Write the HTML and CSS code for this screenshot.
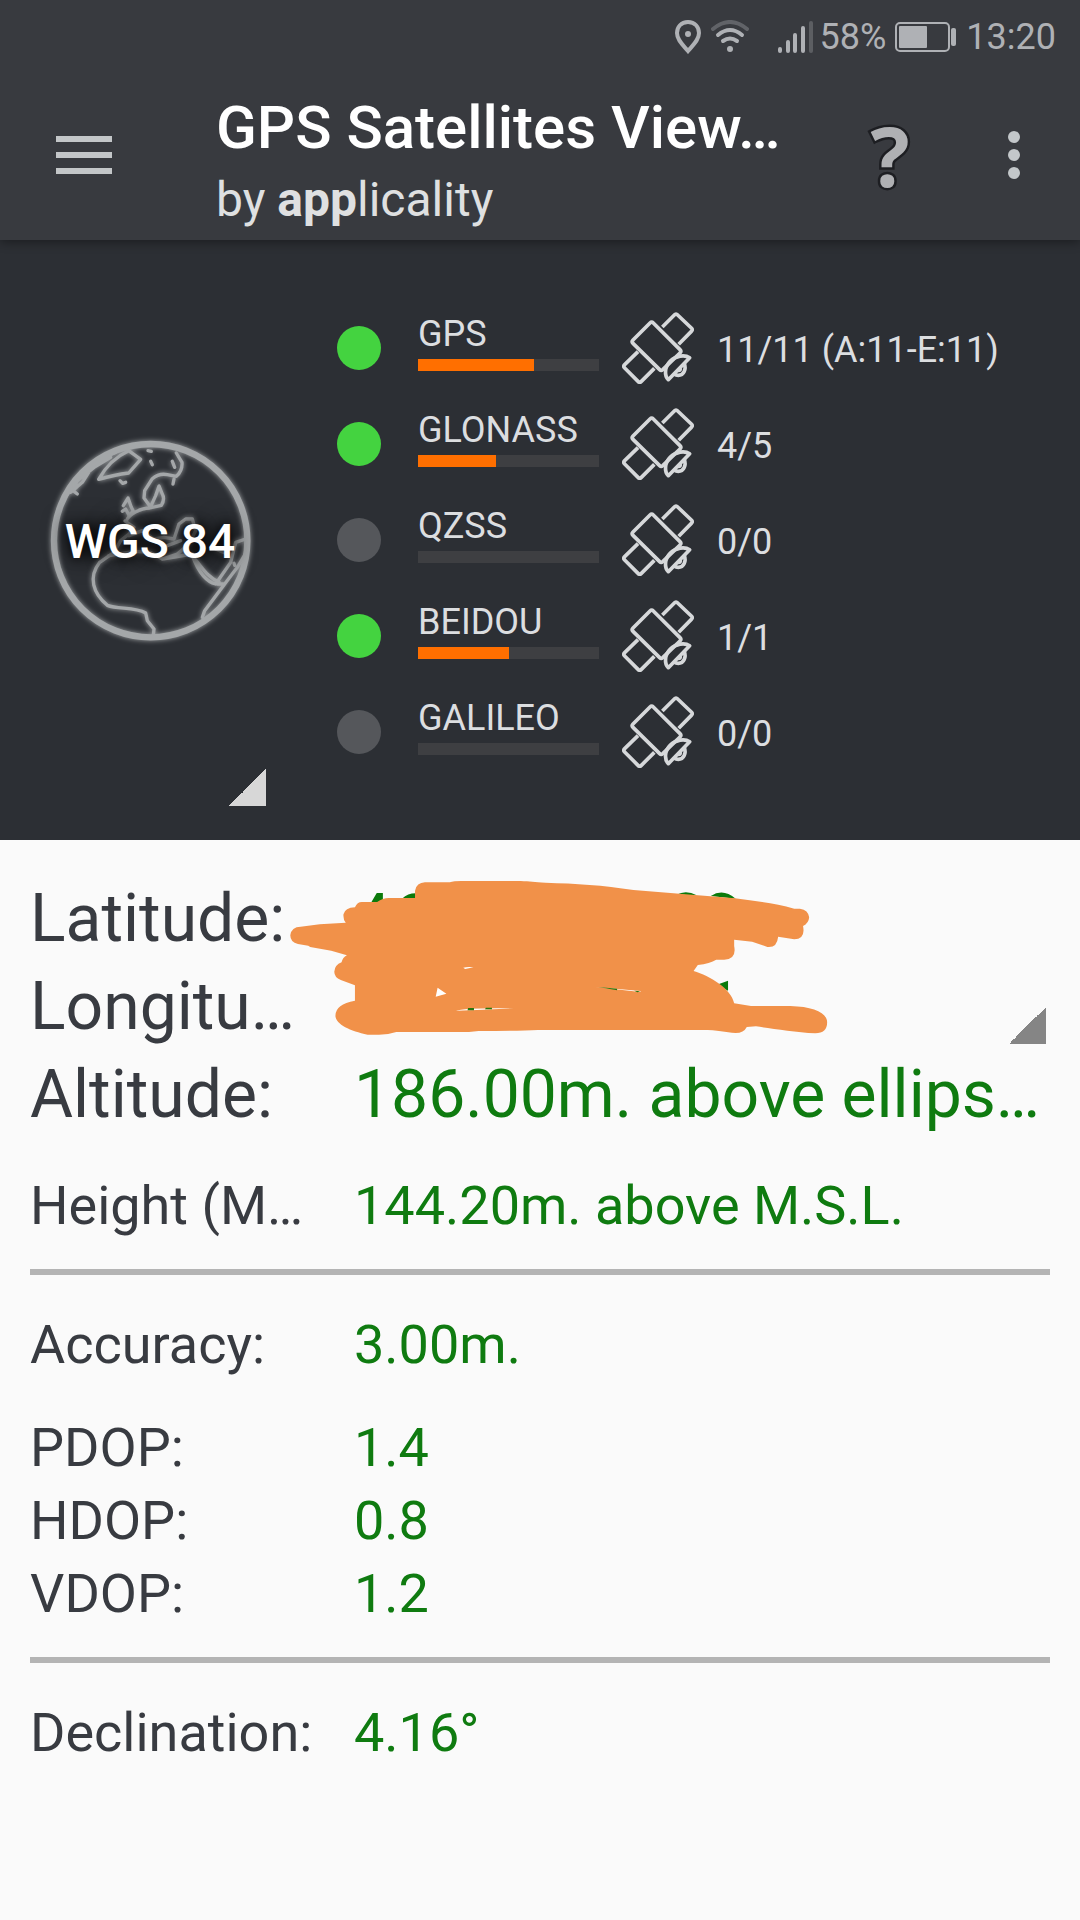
FILE: index.html
```html
<!DOCTYPE html>
<html lang="en">
<head>
<meta charset="utf-8">
<meta name="viewport" content="width=device-width, initial-scale=1">
<title>GPS Satellites Viewer</title>
<link rel="stylesheet" href="styles.css">
</head>
<body>
<svg class="defs" width="0" height="0" aria-hidden="true">
  <symbol id="satellite" viewBox="0 0 216 216">
    <g fill="none" stroke="currentColor" stroke-width="11" stroke-linejoin="round">
      <path d="M121 45 157 9Q162 3 167 9L208 48Q213 53 208 58L170 97"/>
      <path d="M84 33Q89 28 94 33L174 113Q179 118 174 123L123 172Q118 178 113 173L33 94Q28 89 33 84Z"/>
      <path d="M48 119 8 158Q3 163 8 168L48 208Q53 213 58 208L97 169"/>
      <path d="M203 137 139 203C126 190 128 164 145 147C161 131 188 127 203 137Z"/>
      <path d="M187 155C193 171 186 190 169 190Q162 190 156 186M174 168Q178 175 168 175"/>
    </g>
  </symbol>
</svg>

<header class="top">
  <div class="status">
    <svg class="pin" viewBox="0 0 26 34"><path d="M13 2C6 2 2 7 2 13C2 20 8 25 13 31C18 25 24 20 24 13C24 7 20 2 13 2Z" fill="none" stroke="currentColor" stroke-width="4"/><circle cx="13" cy="14" r="3" fill="currentColor"/></svg>
    <svg class="wifi" viewBox="0 0 38 34"><g fill="none" stroke="currentColor" stroke-width="4" stroke-linecap="round"><path d="M2 9Q19-5 36 9" opacity=".35"/><path d="M7 15Q19 5 31 15M12 21Q19 16 26 21"/></g><circle cx="19" cy="29" r="3" fill="currentColor"/></svg>
    <svg class="signal" viewBox="0 0 35 34"><g stroke="currentColor" stroke-width="4" stroke-linecap="round"><path d="M2 29v2M10 22v9M17 15v16M25 8v23"/><path d="M33 3v28" opacity=".3"/></g></svg>
    <span>58%</span>
    <svg class="battery" viewBox="0 0 62 30"><rect x="1" y="1" width="53" height="28" rx="4" fill="none" stroke="currentColor" stroke-width="2"/><rect x="4" y="4" width="28" height="22" rx="1" fill="currentColor"/><rect x="56" y="6" width="5" height="18" rx="2" fill="currentColor"/></svg>
    <time>13:20</time>
  </div>
  <div class="appbar">
    <button class="menu" aria-label="Open menu"><svg viewBox="0 0 56 38"><path d="M0 0h56v6H0zM0 16h56v6H0zM0 32h56v6H0z" fill="currentColor"/></svg></button>
    <div class="titles">
      <h1>GPS Satellites View…</h1>
      <p>by <b>app</b>licality</p>
    </div>
    <button class="help">?</button>
    <button class="more" aria-label="More options"><svg viewBox="0 0 12 48"><g fill="currentColor"><circle cx="6" cy="6" r="6"/><circle cx="6" cy="24" r="6"/><circle cx="6" cy="42" r="6"/></g></svg></button>
  </div>
</header>

<section class="systems">
  <button class="datum">
    <svg class="globe" viewBox="0 0 696 696" aria-hidden="true">
      <defs><filter id="glow" x="-10%" y="-10%" width="120%" height="120%"><feGaussianBlur stdDeviation="8"/></filter></defs>
      <g fill="none" stroke="#a4a7a9" stroke-linejoin="round" stroke-linecap="round">
        <g id="lines">
          <circle cx="350" cy="350" r="290" stroke-width="19"/>
          <g stroke-width="10">
            <path d="M194 166C217 124 247 97 284 80L320 106L284 147Q242 152 194 166"/>
            <path d="M120 190 135 160 165 135 185 115 220 95 245 85M115 200 145 175 172 132M150 145 200 105M105 190 130 210M130 170 180 130 230 100M110 205 128 190"/>
            <path d="M342 80 352 82M350 112 355 122M258 170 266 178 275 175"/>
            <path d="M277 292C282 272 320 252 347 252L382 244Q394 225 384 208L375 186 365 215 350 248M347 245 330 222 332 200 355 164Q375 147 400 152L427 157Q446 140 444 115L427 87"/>
            <path d="M415 112 422 130M417 180 420 165M268 245 282 222 292 250 298 262 285 274 275 255 265 262"/>
            <path d="M273 291 300 310 285 330 260 350 240 385 197 415C162 460 177 507 220 544C252 557 302 547 335 567L340 590 360 615 358 635"/>
            <path d="M285 335 325 320 360 345 390 340 420 345 435 300 455 285 475 285 485 320 465 360 430 390 385 405 350 385 300 382 225 395M385 405 475 390M400 365 440 350"/>
            <path d="M475 395C490 435 510 472 545 480L590 415 605 355 635 345M482 405C505 430 520 460 555 474M550 480H572L512 560 505 580M572 480 610 430 637 385M580 390 545 375M600 418 602 424"/>
          </g>
        </g>
      </g>
      <use href="#lines" fill="none" stroke="#a4a7a9" filter="url(#glow)"/>
    </svg>
    <span>WGS 84</span>
  </button>
  <ul class="list">
    <li><i class="dot on"></i><div class="name">GPS<div class="track"><div class="fill" style="width:64%"></div></div></div><svg class="sat"><use href="#satellite"/></svg><span class="count">11/11 (A:11-E:11)</span></li>
    <li><i class="dot on"></i><div class="name">GLONASS<div class="track"><div class="fill" style="width:43%"></div></div></div><svg class="sat"><use href="#satellite"/></svg><span class="count">4/5</span></li>
    <li><i class="dot"></i><div class="name">QZSS<div class="track"></div></div><svg class="sat"><use href="#satellite"/></svg><span class="count">0/0</span></li>
    <li><i class="dot on"></i><div class="name">BEIDOU<div class="track"><div class="fill" style="width:50%"></div></div></div><svg class="sat"><use href="#satellite"/></svg><span class="count">1/1</span></li>
    <li><i class="dot"></i><div class="name">GALILEO<div class="track"></div></div><svg class="sat"><use href="#satellite"/></svg><span class="count">0/0</span></li>
  </ul>
</section>

<main class="data">
  <div class="coords">
    <dl class="large">
      <dt>Latitude:</dt><dd></dd>
      <dt>Longitu…</dt><dd></dd>
    </dl>
    <svg class="scribble" viewBox="0 0 1568 570" preserveAspectRatio="none" aria-hidden="true">
      <path fill="#0b7a0b" d="M264 128 279 99H295V128ZM345 116Q362 98 385 100V116ZM1062 104Q1088 88 1115 106ZM1152 108Q1184 84 1217 116ZM1168 374 1197 362V392Z"/>
      <path fill="#f19149" d="M379 112V92Q383 68 405 67H470Q480 63 500 63H655C680 64 690 67 720 68C800 71 870 75 950 90L1215 115C1270 124 1320 129 1370 146H1385Q1407 150 1409 172Q1408 190 1393 198Q1400 237 1370 238L1328 230Q1325 264 1300 261L1260 245 1213 239V258Q1220 298 1187 299H1166Q1150 311 1118 315L1107 333C1150 348 1205 385 1213 430L1257 438H1360C1420 440 1456 458 1456 487Q1456 520 1425 520C1370 516 1310 505 1270 499L1246 501Q1238 519 1217 519C1190 517 1170 510 1130 510H700Q650 513 545 513L520 516H330Q310 524 285 524H255C210 513 171 493 171 467Q171 432 222 422V376L185 360Q168 352 168 335Q169 315 187 307Q190 292 201 286L160 272 105 261 100 257 73 252Q53 247 53 226Q56 200 80 200L130 193 198 188Q191 180 192 163Q196 143 222 142 Q228 126 240 126H280Q295 114 310 114H379Z"/>
      <path fill="#fff" d="M438 383 461 401 433 410ZM505 323Q518 319 532 322L510 327ZM485 452Q510 443 637 445L540 450ZM850 381 968 393V396Z"/>
      <path fill="#28770e" d="M518 444H533V451H516ZM564 443H580V448H562ZM858 381 907 386V391ZM952 392 968 394 960 397Z"/>
    </svg>
    <button class="corner" aria-label="Coordinate format"></button>
  </div>
  <dl class="large"><dt>Altitude:</dt><dd>186.00m. above ellips…</dd></dl>
  <dl class="height"><dt>Height (M…</dt><dd>144.20m. above M.S.L.</dd></dl>
  <hr>
  <dl class="accuracy"><dt>Accuracy:</dt><dd>3.00m.</dd></dl>
  <dl>
    <dt>PDOP:</dt><dd>1.4</dd>
    <dt>HDOP:</dt><dd>0.8</dd>
    <dt>VDOP:</dt><dd>1.2</dd>
  </dl>
  <hr>
  <dl><dt>Declination:</dt><dd>4.16°</dd></dl>
</main>
</body>
</html>
```
FILE: styles.css
```css
* { box-sizing: border-box; }
body {
  margin: 0;
  min-height: 100vh;
  background: #fafafa;
  color: #383b41;
  font-family: Roboto, "Noto Sans", sans-serif;
}
h1, p, ul, dl, dd { margin: 0; padding: 0; }
button { border: 0; padding: 0; background: none; color: inherit; font: inherit; }
svg { display: block; flex: none; }
.defs { position: absolute; }

/* status bar and app bar */
.top {
  position: relative;
  background: #383a3f;
  box-shadow: 0 2px 10px rgba(0, 0, 0, .4);
}
.status {
  display: flex;
  align-items: center;
  justify-content: flex-end;
  height: 72px;
  padding: 2px 24px 0;
  color: #afb1b5;
  font-size: 36px;
  line-height: 42px;
}
.pin { width: 26px; height: 34px; }
.wifi { width: 38px; height: 34px; margin: 0 29px 0 10px; }
.signal { width: 35px; height: 34px; margin-right: 7px; }
.battery { width: 62px; height: 30px; margin: 0 9px; }
.appbar {
  display: flex;
  align-items: center;
  height: 168px;
  padding: 0 60px 2px 56px;
}
.menu { color: #c3c6c8; }
.menu svg { width: 56px; height: 38px; }
.titles { flex: 1; min-width: 0; margin-left: 104px; padding-top: 10px; white-space: nowrap; }
.titles h1 { color: #fff; font-size: 60px; font-weight: 500; line-height: 70px; }
.titles p { margin-top: 9px; color: #dfe0e1; font-size: 48px; line-height: 56px; }
.help {
  width: 48px;
  margin-right: 94px;
  color: #afb0b3;
  font-family: "Open Sans", sans-serif;
  font-size: 82px;
  font-weight: 700;
  line-height: 94px;
  -webkit-text-stroke: 5px #1d1e22;
  paint-order: stroke fill;
}
.more { color: #c3c7ca; }
.more svg { width: 12px; height: 48px; }

/* satellite systems */
.systems {
  display: flex;
  gap: 71px;
  padding: 34px;
  background: #2c2f34;
  color: #dcdee0;
}
.datum {
  display: grid;
  place-items: center;
  width: 232px;
  background: linear-gradient(135deg, transparent 50%, #d7d7d7 50%) right bottom / 37px 37px no-repeat;
}
.datum > * { grid-area: 1 / 1; }
.globe { width: 232px; height: 232px; }
.datum span {
  z-index: 1;
  padding-top: 4px;
  color: #fff;
  font-size: 48px;
  font-weight: 500;
  line-height: 56px;
  text-shadow: 0 0 12px #000, 0 0 24px #000;
}
.list { flex: 1; padding: 26px 0; list-style: none; font-size: 36px; line-height: 42px; }
.list li {
  display: grid;
  grid-template-columns: 44px 181px 72px 1fr;
  align-items: center;
  height: 96px;
}
.dot { width: 44px; height: 44px; border-radius: 50%; background: #55575b; }
.dot.on { background: #44d340; }
.name { width: 181px; margin-left: 37px; padding-bottom: 12px; }
.track { height: 12px; margin-top: 4px; background: #3e3f42; }
.fill { height: 100%; background: #ff6f00; }
.sat { width: 72px; height: 72px; margin-left: 60px; color: #d6d8da; }
.count { margin-left: 83px; padding-top: 4px; white-space: nowrap; }

/* readings */
.data { padding: 35px 30px; }
dl {
  display: grid;
  grid-template-columns: 324px 1fr;
  font-size: 54px;
  line-height: 73px;
  white-space: nowrap;
}
dd { color: #0f7b10; }
.large { font-size: 66px; line-height: 88px; }
.height { margin-top: 30px; }
.accuracy { margin-bottom: 30px; }
hr { height: 6px; margin: 27px 0 33px; border: 0; background: #b4b4b4; }
.coords { position: relative; }
.scribble { position: absolute; left: 240px; top: -15px; width: 600px; height: 190px; }
.corner {
  position: absolute;
  right: 4px;
  bottom: 7px;
  width: 37px;
  height: 37px;
  background: linear-gradient(135deg, transparent 50%, #858585 50%);
}
```
